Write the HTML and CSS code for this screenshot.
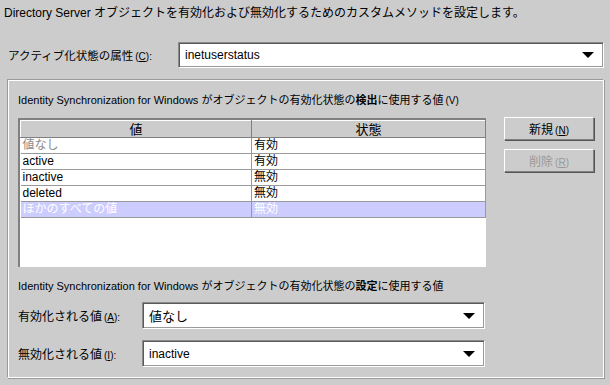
FILE: index.html
```html
<!DOCTYPE html>
<html>
<head>
  <title>カスタムメソッド</title>
  <link rel="stylesheet" href="styles.css">
</head>
<body>
  <p class="intro">Directory Server オブジェクトを有効化および無効化するためのカスタムメソッドを設定します。</p>

  <div class="attr-row">
    <label class="attr-label">アクティブ化状態の属性<span class="mn">(<u>C</u>):</span></label>
    <div class="combo combo-wide">
      <span>inetuserstatus</span>
      <span class="arrow"></span>
    </div>
  </div>

  <div class="group">
    <p class="group-title">Identity Synchronization for Windows がオブジェクトの有効化状態の<b>検出</b>に使用する値<span class="mn">(V)</span></p>

    <div class="detect">
      <div class="table-box">
        <table class="grid">
          <thead>
            <tr>
              <th class="col-val">値</th>
              <th>状態</th>
            </tr>
          </thead>
          <tbody>
            <tr><td class="dim">値なし</td><td>有効</td></tr>
            <tr><td>active</td><td>有効</td></tr>
            <tr><td>inactive</td><td>無効</td></tr>
            <tr><td>deleted</td><td>無効</td></tr>
            <tr class="selected"><td>ほかのすべての値</td><td>無効</td></tr>
          </tbody>
        </table>
      </div>

      <div class="buttons">
        <button class="btn">新規<span class="mn">(<u>N</u>)</span></button>
        <button class="btn" disabled>削除<span class="mn">(<u>R</u>)</span></button>
      </div>
    </div>

    <p class="group-title second">Identity Synchronization for Windows がオブジェクトの有効化状態の<b>設定</b>に使用する値</p>

    <div class="set-row first">
      <label class="set-label">有効化される値<span class="mn">(<u>A</u>):</span></label>
      <div class="combo combo-small">
        <span class="jp">値なし</span>
        <span class="arrow"></span>
      </div>
    </div>
    <div class="set-row">
      <label class="set-label">無効化される値<span class="mn">(<u>I</u>):</span></label>
      <div class="combo combo-small">
        <span>inactive</span>
        <span class="arrow"></span>
      </div>
    </div>
  </div>
</body>
</html>
```

FILE: styles.css
```css
body {
  margin: 0;
  background-color: #cccccc;
  font-family: "Liberation Sans", "Noto Sans CJK JP", sans-serif;
  font-size: 12px;
  color: #000;
  width: 610px;
  height: 385px;
  overflow: hidden;
}

p {
  margin: 0;
}

.intro {
  padding: 5px 0 0 4px;
  height: 16px;
  line-height: 16px;
  font-size: 12px;
}

.mn {
  font-size: 10px;
  margin-left: 2px;
}

.attr-row {
  display: flex;
  align-items: center;
  margin-top: 21px;
  padding-left: 8px;
}

.attr-label {
  width: 170px;
  font-size: 11.5px;
}

.combo {
  box-sizing: border-box;
  display: flex;
  align-items: center;
  justify-content: space-between;
  background-color: #fff;
  border: 1px solid;
  border-color: #8a8a8a #ffffff #ffffff #8a8a8a;
  box-shadow: inset 1px 1px 0 #5a5a5a, inset -1px -1px 0 #9a9a9a;
  padding: 0 9px 0 6px;
  font-size: 12px;
}

.combo-wide {
  width: 426px;
  height: 26px;
}

.combo-small {
  width: 343px;
  height: 27px;
}

.arrow {
  width: 0;
  height: 0;
  border-left: 6px solid transparent;
  border-right: 6px solid transparent;
  border-top: 6px solid #000;
}

.jp {
  font-size: 13px;
}

.group {
  box-sizing: border-box;
  margin: 11px 6px 0 7px;
  height: 299px;
  border: 1px solid;
  border-color: #999999 #ffffff #ffffff #999999;
  box-shadow: inset 1px 1px 0 #ffffff, 1px 1px 0 #999999;
  padding: 13px 0 0 10px;
}

.group-title {
  height: 14px;
  line-height: 14px;
  font-size: 11px;
}

.group-title b {
  font-size: 11px;
}

.detect {
  display: flex;
  margin-top: 11px;
}

.table-box {
  box-sizing: border-box;
  width: 468px;
  height: 149px;
  background-color: #fff;
  border-top: 2px solid #808080;
  border-left: 2px solid #808080;
}

.grid {
  width: 100%;
  border-collapse: collapse;
  font-size: 12px;
}

.grid th {
  height: 16px;
  background-color: #cccccc;
  font-weight: normal;
  font-size: 13px;
  border: 1px solid;
  border-color: #ffffff #808080 #808080 #ffffff;
  padding: 0;
  line-height: 15px;
}

.grid .col-val {
  width: 230px;
}

.grid td {
  height: 15px;
  padding: 0 2px;
  border: 1px solid #999999;
  border-top: none;
  border-left: none;
  line-height: 15px;
}

.grid .dim {
  color: #8a8a8a;
}

.grid .selected td {
  background-color: #ccccff;
  color: #ffffff;
}

.buttons {
  display: flex;
  flex-direction: column;
  gap: 9px;
  margin-left: 18px;
  margin-top: -1px;
}

.btn {
  width: 90px;
  height: 23px;
  background-color: #cccccc;
  border: 1px solid;
  border-color: #ffffff #808080 #808080 #ffffff;
  box-shadow: 1px 1px 0 #555555;
  font-family: "Liberation Sans", "Noto Sans CJK JP", sans-serif;
  font-size: 12px;
  color: #000;
  padding: 0;
}

.btn:disabled {
  color: #999999;
}

.second {
  margin-top: 12px;
}

.set-row {
  display: flex;
  align-items: center;
  margin-top: 11px;
}

.set-row.first {
  margin-top: 9px;
}

.set-label {
  width: 124px;
  font-size: 12px;
}
```
